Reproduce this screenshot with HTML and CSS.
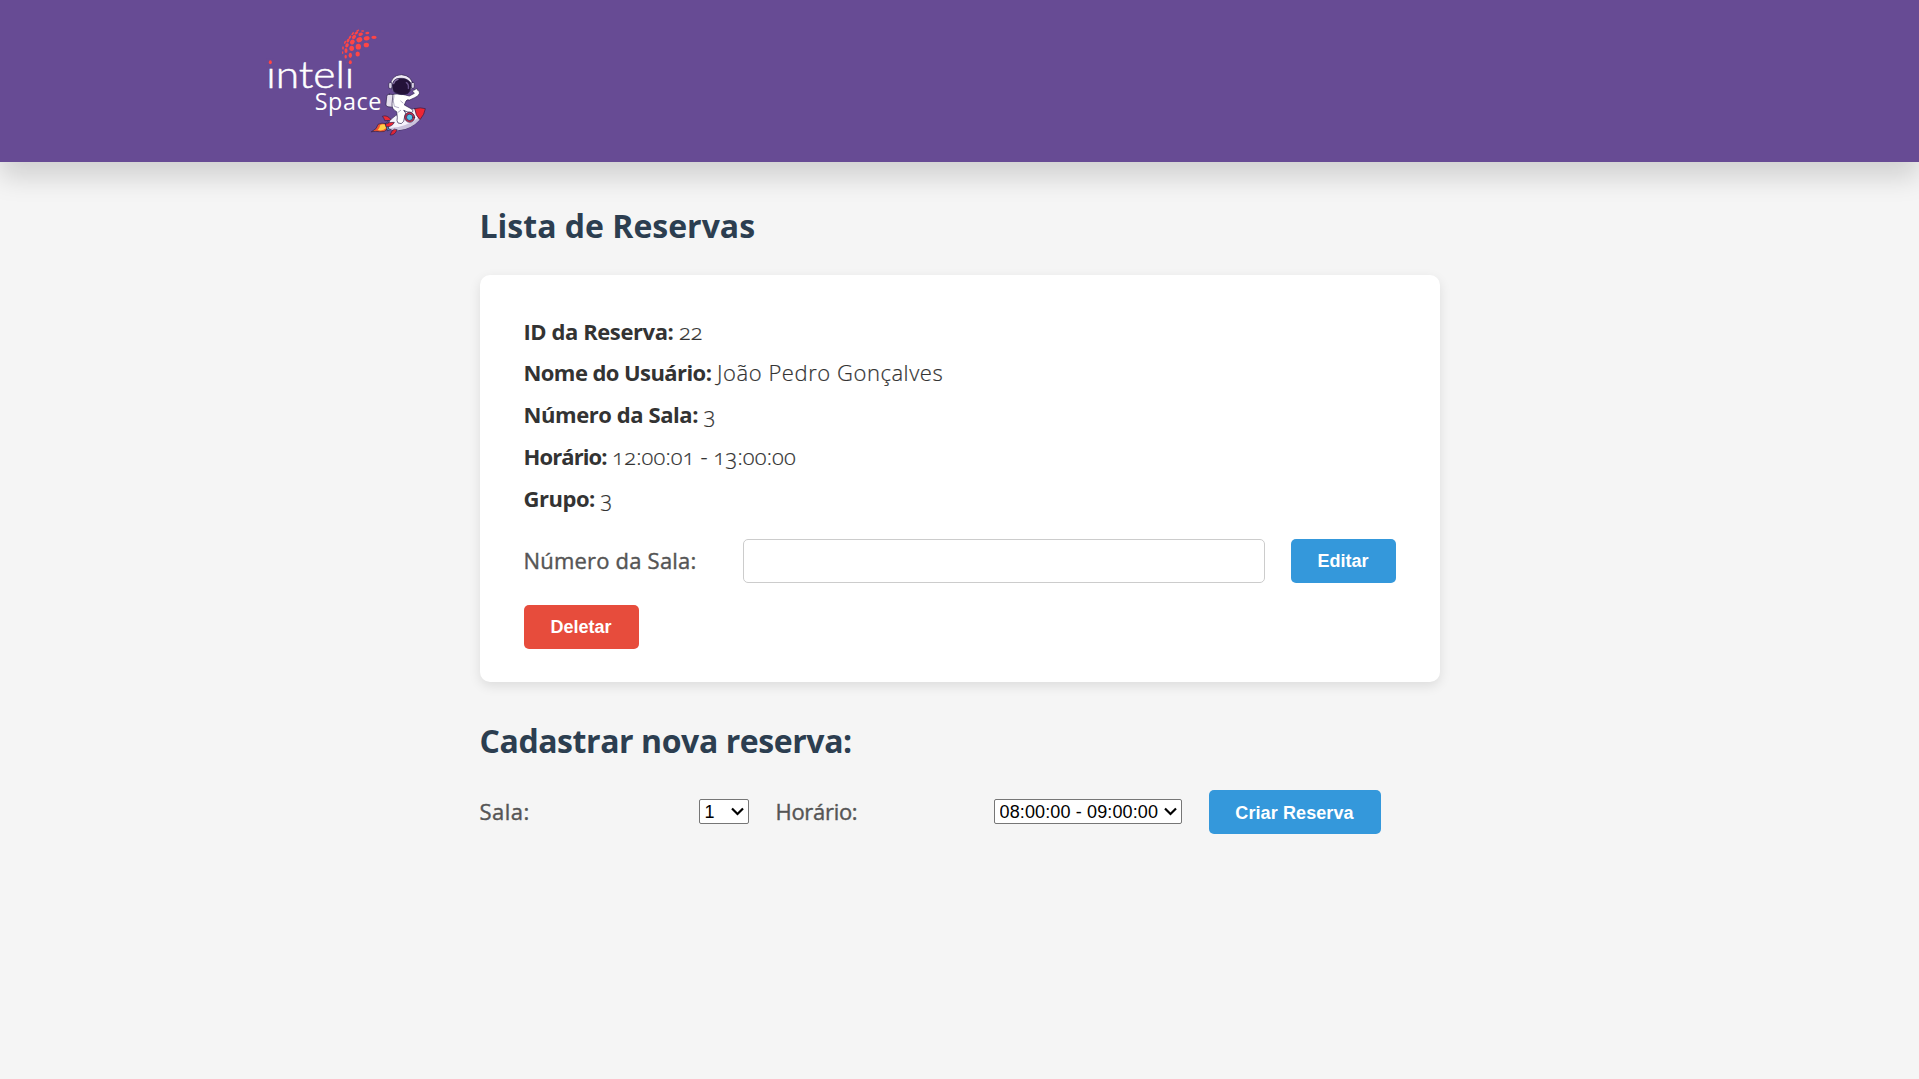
FILE: index.html
```html
<!DOCTYPE html>
<html lang="pt-BR">
<head>
<meta charset="utf-8">
<title>Inteli Space - Reservas</title>
<link rel="stylesheet" href="styles.css">
</head>
<body>
<header class="header">
  <svg class="logo" viewBox="0 0 570 405" role="img" aria-label="Inteli Space">
    <text class="logo-name" x="49" y="220" textLength="264" lengthAdjust="spacingAndGlyphs">inteli</text>
    <g class="logo-mask"><rect x="50" y="130" width="22" height="27"/><rect x="290" y="130" width="22" height="27"/></g>
    <text class="logo-sub" x="194" y="286" textLength="200">Space</text>
    <g class="logo-dots">
      <ellipse cx="61" cy="142" rx="4.5" ry="6"/><ellipse cx="301" cy="142" rx="4.5" ry="6"/>
      <ellipse cx="372" cy="67" rx="8" ry="5"/>
      <ellipse cx="352" cy="54" rx="6" ry="3.5" transform="rotate(-8 352 54)"/>
      <ellipse cx="338" cy="48" rx="5" ry="2.5"/><ellipse cx="323" cy="47" rx="5" ry="2.5" transform="rotate(-30 323 47)"/>
      <ellipse cx="350" cy="70" rx="9" ry="6.5" transform="rotate(-10 350 70)"/>
      <ellipse cx="332" cy="58" rx="7" ry="5" transform="rotate(-25 332 58)"/>
      <ellipse cx="319" cy="54" rx="6" ry="3.5" transform="rotate(-35 319 54)"/>
      <ellipse cx="308" cy="56" rx="5.5" ry="2.5" transform="rotate(-50 308 56)"/>
      <ellipse cx="349" cy="90" rx="8" ry="7"/>
      <ellipse cx="328" cy="74" rx="9" ry="7.5" transform="rotate(-25 328 74)"/>
      <ellipse cx="312" cy="66" rx="7" ry="5" transform="rotate(-45 312 66)"/>
      <ellipse cx="300" cy="67" rx="6" ry="3" transform="rotate(-58 300 67)"/>
      <ellipse cx="325" cy="95" rx="8" ry="8.5"/>
      <ellipse cx="307" cy="81" rx="8" ry="6.5" transform="rotate(-50 307 81)"/>
      <ellipse cx="294" cy="77" rx="6" ry="4" transform="rotate(-60 294 77)"/>
      <ellipse cx="285" cy="82" rx="5" ry="2.5" transform="rotate(-65 285 82)"/>
      <ellipse cx="323" cy="117" rx="6.5" ry="7.5"/>
      <ellipse cx="305" cy="100" rx="7" ry="8"/>
      <ellipse cx="291" cy="91" rx="6.5" ry="5" transform="rotate(-65 291 91)"/>
      <ellipse cx="301" cy="121" rx="5" ry="8"/>
      <ellipse cx="288" cy="107" rx="4.5" ry="7"/>
      <ellipse cx="279" cy="99" rx="2.5" ry="5"/><ellipse cx="287" cy="125" rx="3.5" ry="5.5"/><ellipse cx="278" cy="113" rx="2" ry="4"/>
    </g>
    <g class="rocket" stroke="#2b1e4a" stroke-width="2" stroke-linejoin="round" stroke-linecap="round">
      <path d="M365 350 Q382 342 384 328 Q396 322 408 326 L414 340 Q404 354 388 350 Q378 348 365 350Z" fill="#f0552e"/>
      <path d="M383 345 Q389 339 391 330 Q399 326 407 330 L409 339 Q399 349 383 345Z" fill="#ffd047" stroke="none"/>
      <path d="M424 315 Q412 298 397 304 Q402 309 404 316Z" fill="#ea2b36"/>
      <path d="M407 325 L414 320 L423 343 L413 347Z" fill="#3b9ccc"/>
      <path d="M416 340 Q412 322 424 312 Q446 290 496 280 L512 311 Q482 344 444 346 Q426 347 416 340Z" fill="#f6f3fb"/>
      <path d="M420 338 Q462 340 508 307 L512 311 Q482 344 444 346 Q426 347 416 340Z" fill="#cbc3dc" stroke="none"/>
      <path d="M494 281 Q512 276 526 281 Q524 298 510 314 Q496 302 494 281Z" fill="#ed2634"/>
      <path d="M407 327 Q418 320 433 322 Q427 335 410 336Z" fill="#ed2634"/>
      <path d="M432 343 Q424 347 420 360 Q434 362 441 345Z" fill="#dc2436"/>
      <rect x="409" y="238" width="26" height="38" rx="7" fill="#e5deed" transform="rotate(6 422 257)"/>
      <path d="M430 238 Q447 233 466 240 L478 243 L493 235 Q485 228 490 225 Q496 226 496 222 Q502 217 503 226 Q511 228 508 236 Q504 245 494 248 L479 255 Q470 253 468 258 L463 270 L485 282 Q494 290 485 292 Q470 292 461 286 L467 294 Q463 306 461 319 Q455 330 444 324 Q439 318 442 307 L440 290 Q424 282 426 267Z" fill="#fff"/>
      <path d="M432 242 Q427 258 433 274 L446 278 M459 264 L452 258 M444 292 L452 286" fill="none" stroke="#8980a5"/>
      <path d="M422 213 Q421 181 454 179 Q487 182 488 211 Q486 234 456 239 Q428 237 422 213Z" fill="#eee8f4"/>
      <path d="M427 211 Q429 190 449 190 Q470 188 482 203 Q487 222 473 236 Q450 243 432 230 Q426 222 427 211Z" fill="#241239"/>
      <path d="M431 206 Q434 195 444 193" fill="none" stroke="#826da0" stroke-width="4"/>
      <path d="M469 203 Q477 208 475 220" fill="none" stroke="#67528a" stroke-width="4"/>
      <rect x="416" y="202" width="10" height="19" rx="5" fill="#d8d0e4"/><rect x="484" y="202" width="9" height="18" rx="4" fill="#d8d0e4"/>
      <circle cx="479" cy="307" r="15" fill="#c92f47"/><circle cx="479" cy="307" r="9.5" fill="#55c0e7"/>
    </g>
  </svg>
</header>
<main class="content">
  <h2 class="title">Lista de Reservas</h2>
  <section class="card">
    <p class="row"><strong class="k-id">ID da Reserva:</strong> <span class="v-num">22</span></p>
    <p class="row"><strong class="k-user">Nome do Usuário:</strong> <span class="v-user">João Pedro Gonçalves</span></p>
    <p class="row"><strong class="k-room">Número da Sala:</strong> <span class="v-num">3</span></p>
    <p class="row"><strong class="k-time">Horário:</strong> <span class="v-time">12:00:01 - 13:00:00</span></p>
    <p class="row"><strong class="k-group">Grupo:</strong> <span class="v-num">3</span></p>
    <form class="form form-edit">
      <label class="label l-room" for="numero">Número da Sala:</label>
      <input class="input" id="numero" type="text">
      <button class="button edit" type="button">Editar</button>
    </form>
    <button class="button delete" type="button">Deletar</button>
  </section>
  <h2 class="title title-new">Cadastrar nova reserva:</h2>
  <form class="form">
    <label class="label l-sala" for="sala">Sala:</label>
    <select class="select select-room" id="sala"><option>1</option></select>
    <label class="label l-time" for="horario">Horário:</label>
    <select class="select select-time" id="horario"><option>08:00:00 - 09:00:00</option></select>
    <button class="button create" type="button">Criar Reserva</button>
  </form>
</main>
</body>
</html>
```
FILE: styles.css
```css
* { box-sizing: border-box; }
body {
  margin: 0;
  background: #f5f5f5;
  color: #333;
  font-family: "Open Sans", sans-serif;
  font-size: 22px;
}
.header {
  height: 162px;
  padding: 15px 0 0 250px;
  background: #674b94;
  box-shadow: 0 15px 25px rgba(0, 0, 0, .15);
}
.logo { display: block; width: 190px; height: 135px; }
.logo-name { font: 300 112px Lato, sans-serif; fill: #fff; stroke: #fff; stroke-width: 1.5; }
.logo-mask { fill: #674b94; }
.logo-sub { font: 400 70px "Open Sans", sans-serif; fill: #fff; }
.logo-dots { fill: #ff4545; }
.content { width: 960px; margin: 0 auto; padding-top: 44px; }
.title { margin: 0 0 29px; font-size: 32px; line-height: 40px; font-weight: 700; color: #2c3e50; }
.title-new { margin-top: 39px; letter-spacing: -.42px; }
.card {
  height: 407px;
  padding: 35.6px 44px 33px;
  border-radius: 10px;
  background: #fff;
  box-shadow: 0 4px 12px rgba(0, 0, 0, .1);
}
.row { margin: 0; line-height: 41.8px; font-weight: 300; font-variant-numeric: oldstyle-nums; }
.row span { -webkit-text-stroke: .2px #333; }
.row strong { font-weight: 700; }
.k-id { letter-spacing: -.42px; }
.k-user { letter-spacing: -.57px; }
.k-room { letter-spacing: -.42px; }
.k-time { letter-spacing: -.9px; }
.k-group { letter-spacing: -.48px; }
.v-user { letter-spacing: .55px; }
.v-time { letter-spacing: .14px; }
.form { display: flex; align-items: center; height: 44px; }
.form-edit { margin: 19.4px 0 22px; }
.label { width: 219px; padding-bottom: 2px; flex: none; font-weight: 500; color: #555; -webkit-text-stroke: .4px #555; }
.l-room { letter-spacing: .2px; }
.l-sala { letter-spacing: .48px; }
.l-time { width: 218px; letter-spacing: -.3px; }
.input { width: 522px; height: 44px; margin: 0 26px 0 0; border: 1px solid #ccc; border-radius: 5px; background: #fff; }
.button {
  height: 44px;
  padding: 2px 0 0;
  border: 0;
  border-radius: 5px;
  background: #3498db;
  color: #fff;
  font: 700 18px "Liberation Sans", Arial, sans-serif;
}
.edit { width: 105px; }
.create { width: 172px; letter-spacing: .1px; }
.delete { display: block; width: 115px; background: #e74c3c; }
.select {
  height: 25px;
  margin: 0 27px 1px 0;
  border: 1px solid #767676;
  border-radius: 2px;
  background-color: #fff;
  color: #000;
  font: 18px "Liberation Sans", Arial, sans-serif;
  appearance: none;
  padding: 0 0 0 5px;
  background-image: url("data:image/svg+xml,%3Csvg xmlns='http://www.w3.org/2000/svg' width='13' height='9' fill='none' stroke='black' stroke-width='2.2'%3E%3Cpath d='M1 1.5 6.5 7 12 1.5'/%3E%3C/svg%3E");
  background-repeat: no-repeat;
  background-position: right 4px center;
}
.select-room { width: 50px; }
.select-time { width: 188px; letter-spacing: .13px; }
```
